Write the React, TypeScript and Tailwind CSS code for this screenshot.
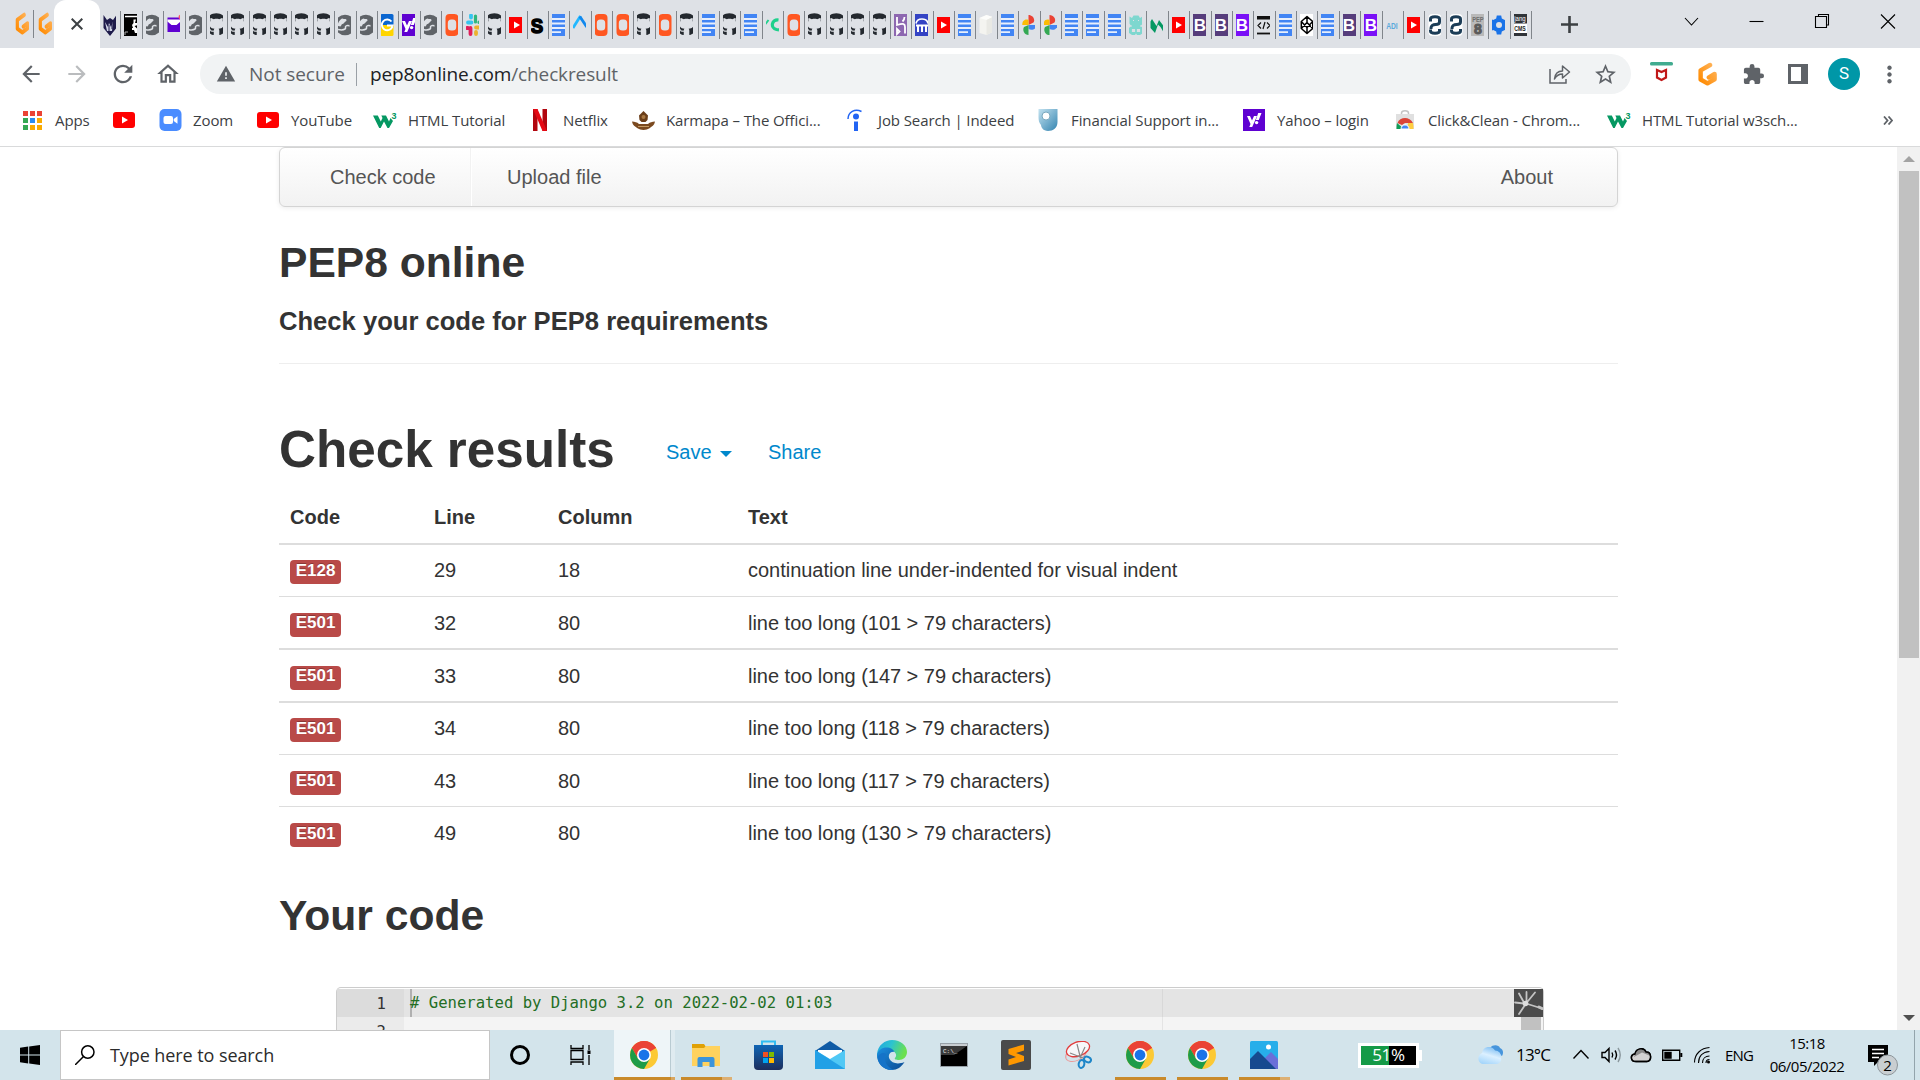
import React from "react";
import {
  MdArrowBack, MdArrowForward, MdRefresh, MdOutlineHome, MdStarBorder,
  MdExtension, MdMoreVert, MdWarning,
} from "react-icons/md";
import { FaGithub } from "react-icons/fa";

const UI = "font-['Open_Sans','Noto_Sans',sans-serif]";

/* ---------- favicons ---------- */

function Svg({ children, w = 22, h = 22, vb = "0 0 22 22" }: { children: React.ReactNode; w?: number; h?: number; vb?: string }) {
  return (
    <svg width={w} height={h} viewBox={vb} className="block shrink-0">
      {children}
    </svg>
  );
}

const gitpod = (
  <g>
    <path d="M13.2 2.6 5 7.3v8L11 18.700l6.200-3.600v-4.600l-5 2.900" fill="none" stroke="url(#gp)" strokeWidth="3.900" strokeLinejoin="round" strokeLinecap="round" />
    <defs>
      <linearGradient id="gp" x1="1" y1="0" x2="0" y2="1">
        <stop offset="0" stopColor="#ffb45b" />
        <stop offset="1" stopColor="#ff8a00" />
      </linearGradient>
    </defs>
  </g>
);

function Youtube({ w = 22, h = 16 }: { w?: number; h?: number }) {
  return (
    <svg width={w} height={h} viewBox="0 0 22 16" className="block shrink-0">
      <rect width="22" height="16" rx="3" fill="#f00" />
      <path d="M9 4.500v7l6-3.500z" fill="#fff" />
    </svg>
  );
}

function YahooIcon() {
  return (
    <Svg>
      <rect width="22" height="22" fill="#5f01d1" />
      <path d="M4 7h3l2 4.600L11 7h3l-4.800 11H6.300l1.200-2.900z" fill="#fff" />
      <path d="M15.200 4h3.300l-2.700 7h-2.900z" fill="#fff" />
      <circle cx="13.600" cy="13.600" r="1.700" fill="#fff" />
    </Svg>
  );
}

function W3() {
  return (
    <Svg w={24} vb="0 0 24 22">
      <path d="M0 6.500h4.800l3 6 1.700-3.500-1.200-2.500H13l3 6 1.500-3.500 2.500 3-4 7h-1.500L11 12.500 7.700 19H6.200z" fill="#059862" />
      <text x="18.500" y="10" fontSize="9" fontWeight="700" fill="#059862" fontFamily="Liberation Sans">3</text>
    </Svg>
  );
}

function Favicon({ k }: { k: string }) {
  switch (k) {
    case "gh":
      return <FaGithub size={23} color="#24292f" className="shrink-0" />;
    case "globe":
      return (
        <Svg>
          <circle cx="11" cy="11" r="10.300" fill="#5f6368" />
          <path d="M4 9.500C5 6.500 7 4.500 9 4.500c.5 1.500 3-.5 3.500 1.500.3 1.500-2 1.500-2.300 3-.7 1-2.700.7-2.700 2l-1 1.500L4 12z" fill="#dee1e6" />
          <path d="M4 15.500c2.500.5 5 .8 7-.5 1.500-1-.5-2 1-3s2.500 0 3.500-.5" fill="none" stroke="#dee1e6" strokeWidth="1.500" />
        </Svg>
      );
    case "docs":
      return (
        <Svg>
          <rect width="22" height="22" fill="#4285f4" />
          <path d="M0 5h22M0 9.500h22M0 14h22M5 18.200h9" stroke="#e8effc" strokeWidth="1.800" />
        </Svg>
      );
    case "yt":
      return <Youtube />;
    case "yahoo":
      return <YahooIcon />;
    case "O":
      return (
        <Svg>
          <rect x="4.500" width="13" height="22" rx="4" fill="#ff5722" />
          <rect x="6.800" y="5.500" width="8.400" height="11" rx="3.500" fill="#dee1e6" />
        </Svg>
      );
    case "B1":
    case "B2":
      return (
        <Svg>
          <rect width="22" height="22" fill={k === "B1" ? "#563d7c" : "#7a10f7"} />
          <text x="11" y="17.300" fontSize="17" fontWeight="700" textAnchor="middle" fill="#fff" fontFamily="Liberation Sans">B</text>
        </Svg>
      );
    case "bat":
      return (
        <Svg>
          <path d="M4.500 1 8 6l3-2 3 2 3.500-5v13L11 22 4.500 14z" fill="#1e1b4b" />
          <path d="m6 8 3 5 1-4 2 4 2-5-1 9h-5z" fill="#cfd3e6" />
          <path d="M10 11v7M13 9v6" stroke="#1e1b4b" />
        </Svg>
      );
    case "R":
      return (
        <Svg>
          <rect width="22" height="22" fill="#000" />
          <path d="M5 2.500h13" stroke="#fff" strokeWidth="1.500" />
          <path d="M13.500 5.500h2.500l-1 3.500h2.500v2l-3 1 3 3v4h-2.500l-1-3h-2v-2h1l-1-3 1.500-2z" fill="#fff" />
          <path d="M8 18h-3v3" stroke="#aaa" fill="none" />
        </Svg>
      );
    case "mail":
      return (
        <Svg>
          <path d="M4.500 3.500h13v14.500h-13z" fill="#5f01d1" />
          <path d="M4.500 5.500h13v2l-4 3.500h-5l-4-3.500z" fill="#fff" />
          <circle cx="18" cy="3" r="2.500" fill="#ff5270" />
        </Svg>
      );
    case "G":
      return (
        <Svg>
          <rect x="4.500" width="13" height="11" rx="1.500" fill="#0a66d0" />
          <rect x="4.500" y="11" width="13" height="11" rx="1.500" fill="#ffd500" />
          <path d="M15.500 7.500A5.400 5.400 0 1 0 16 13.500v-2h-5" fill="none" stroke="#fff" strokeWidth="1.900" />
        </Svg>
      );
    case "slack":
      return (
        <Svg>
          <path d="M9 1.500v2M6 8.500h3.500" stroke="#36c5f0" strokeWidth="3.800" strokeLinecap="round" />
          <path d="M13.500 2v6M17 8v.5" stroke="#2eb67d" strokeWidth="3.200" strokeLinecap="round" />
          <path d="M14 13.500h3M14 18v2" stroke="#ecb22e" strokeWidth="3.800" strokeLinecap="round" />
          <path d="M8.500 14v6M5 14h1" stroke="#e01e5a" strokeWidth="3.800" strokeLinecap="round" />
        </Svg>
      );
    case "S":
      return (
        <Svg>
          <text x="4.800" y="19" fontSize="21" fontWeight="700" fill="#000" stroke="#000" strokeWidth="1.600" fontFamily="Liberation Sans" textLength="12.400" lengthAdjust="spacingAndGlyphs">S</text>
        </Svg>
      );
    case "caret":
      return (
        <Svg>
          <path d="m4 14 7.500-12" stroke="#22b8ff" strokeWidth="2.800" />
          <path d="m10.800 2.500 7 10.500" stroke="#1188ee" strokeWidth="2.800" />
        </Svg>
      );
    case "C":
      return (
        <Svg>
          <path d="M17.500 6c-7-1-8.500 8-2 9.500l2.500.3" fill="none" stroke="#1fd08c" strokeWidth="3.200" />
          <path d="m7.500 6-3 4" stroke="#1fd08c" strokeWidth="2" />
        </Svg>
      );
    case "heroku":
      return (
        <Svg>
          <rect width="22" height="22" fill="#8d67b0" />
          <path d="M8 3v8c7-2 8-1 8 2v6.500M8 15v5l2.500-2.500zM15.500 3c0 2-1 3.500-2 4.500" fill="none" stroke="#fff" strokeWidth="1.800" />
        </Svg>
      );
    case "dome":
      return (
        <Svg>
          <rect width="22" height="22" fill="#3443c4" />
          <path d="M5 9.500c1-6 11-6 12 0" fill="none" stroke="#fff" strokeWidth="1.600" />
          <path d="M5 11.500h12M7 12v6M11 12v6M15 12v6" stroke="#fff" strokeWidth="2" />
        </Svg>
      );
    case "bucket":
      return (
        <Svg>
          <path d="m4.500 4 7-3 6 2v15l-6 3-7-2z" fill="#f4f4f0" />
          <path d="m4.500 4 7 2 6-3-6-2z" fill="#fdfdfb" />
          <path d="M11.500 6v15l6-3V3z" fill="#e9e9e4" />
        </Svg>
      );
    case "photos":
      return (
        <Svg>
          <path d="M10.500 11V1c4 0 7 4 5 7.500z" fill="#ea4335" />
          <path d="M10.500 11H4.300C4 7 7 4.500 10.500 6z" fill="#fbbc04" />
          <path d="M10.500 11h8c0 4-4.500 6-8 4z" fill="#4285f4" />
          <path d="M10.500 11v10c-4 0-6.500-4.500-4.500-8z" fill="#34a853" />
        </Svg>
      );
    case "teal":
      return (
        <Svg>
          <path d="M4.500 2.500 7 4l1.500-2.500h5L15 4l2.500-1.500v7L16 12l2 2v5l-3 2h-3l-1-1.500-1 1.500H7l-3-2v-5l2-2-1.500-2.500z" fill="#7ed7cf" />
          <path d="M8 6.500h1M13 6.500h1M5 12h2M15 12h2M7.500 15.500h2v2h-2zM12.500 15.500h2v2h-2z" stroke="#dee1e6" strokeWidth="1.200" fill="#dee1e6" />
        </Svg>
      );
    case "w":
      return (
        <Svg>
          <path d="M4.500 7.500 6 5l4.500 7L13 6l4.500 6v6L14.500 13 12 10.500 9 19l-4.500-5z" fill="#059862" />
        </Svg>
      );
    case "code":
      return (
        <Svg>
          <path d="M0 2h22v3.500H0z" fill="#111" />
          <path d="M0 19.500h22" stroke="#111" strokeWidth="1.800" />
          <path d="m8 8.500-3 3 3 3M14 8.500l3 3-3 3M12 8l-2 7" stroke="#111" strokeWidth="1.200" fill="none" />
        </Svg>
      );
    case "codepen":
      return (
        <Svg>
          <rect width="22" height="22" fill="#fff" />
          <path d="m11 2.500 5.700 5v7l-5.700 5-5.700-5v-7zM11 2.500V8M11 14v5.500M5.300 7.500 11 13.500l5.700-6M5.300 14.500 11 8.500l5.700 6" fill="none" stroke="#000" strokeWidth="1.500" strokeLinejoin="round" />
        </Svg>
      );
    case "adi":
      return (
        <Svg>
          <text x="5.200" y="14.500" fontSize="9" fontWeight="700" fill="#5aaadc" fontFamily="Liberation Sans" textLength="11.500" lengthAdjust="spacingAndGlyphs">ADI</text>
        </Svg>
      );
    case "py":
      return (
        <Svg>
          <rect x="4.500" width="13" height="22" rx="4" fill="#fff" />
          <path d="M6.500 7.500V5c0-3 9-3 9 0v3c0 2-1.500 2.500-4 2.500S7 12 7 14v1M6.500 15.500V17c0 3 9 3 9 0v-2" fill="none" stroke="#1c3d57" strokeWidth="3" />
        </Svg>
      );
    case "pep":
      return (
        <Svg>
          <rect width="22" height="22" fill="#b9b9b9" />
          <text x="5.200" y="8" fontSize="8" fontWeight="700" fill="#6e6e6e" fontFamily="Liberation Sans" textLength="11.500" lengthAdjust="spacingAndGlyphs">PEP</text>
          <text x="11" y="20" fontSize="14" fontWeight="700" textAnchor="middle" fill="#5b5b5b" stroke="#5b5b5b" fontFamily="Liberation Sans">8</text>
        </Svg>
      );
    case "gear":
      return (
        <Svg>
          <path d="M8.800 1.500h4.400l.6 3 3 1.500 2.700-1 2 3.800-2.200 2.200 2.200 2.200-2 3.800-2.700-1-3 1.500-.6 3H8.800l-.6-3-3-1.500-2.700 1-2-3.800L2.700 11 .5 8.800 2.500 5l2.700 1 3-1.500z" fill="#1a73e8" />
          <circle cx="11" cy="11" r="3" fill="#dee1e6" />
        </Svg>
      );
    case "cms":
      return (
        <Svg>
          <rect width="22" height="22" fill="#2f3338" />
          <rect y="9.500" width="22" height="9.500" fill="#fff" />
          <text x="5.200" y="7" fontSize="6.500" fill="#fff" fontFamily="Liberation Sans" textLength="11.500" lengthAdjust="spacingAndGlyphs">jang</text>
          <text x="5.200" y="17" fontSize="6.500" fontWeight="700" fill="#222" fontFamily="Liberation Sans" textLength="11.500" lengthAdjust="spacingAndGlyphs">CMS</text>
        </Svg>
      );
    default:
      return null;
  }
}

const TABS = (
  "bat R globe mail globe gh gh gh gh gh gh globe globe G yahoo globe O slack gh yt S docs caret O O gh O gh docs gh docs C O " +
  "gh gh gh gh heroku dome yt docs bucket docs photos photos docs docs docs teal w yt B1 B1 B2 code docs codepen docs B1 B2 adi yt py py pep gear cms"
).split(" ");

function TabStrip() {
  return (
    <div className="flex h-12 bg-[#dee1e6]">
      <div className="flex w-[54px] items-center pl-[14px]">
        <div className="flex h-7 w-[20px] items-center border-r border-[#80858b]">
          <svg width="15" height="24" viewBox="1 0 18 22" preserveAspectRatio="none">{gitpod}</svg>
        </div>
        <svg width="15" height="24" viewBox="1 0 18 22" preserveAspectRatio="none" className="ml-[3px]">{gitpod}</svg>
      </div>
      <div className="flex w-[46px] items-center justify-center rounded-t-xl bg-white">
        <svg width="12" height="12" viewBox="0 0 12 12" stroke="#3c4043" strokeWidth="2">
          <path d="m.700.700 10.600 10.600M11.300.700.700 11.300" />
        </svg>
      </div>
      <div className="flex w-[1432px] items-center pt-px">
        {TABS.map((k, i) => (
          <div key={i} className="flex h-7 flex-1 items-center border-r border-[#80858b] pl-[3px]">
            <div className="flex h-[23px] w-[13px] shrink-0 items-center justify-center overflow-hidden">
              <Favicon k={k} />
            </div>
          </div>
        ))}
      </div>
      <div className="flex w-[74px] items-center justify-center">
        <svg width="17" height="17" viewBox="0 0 17 17" stroke="#3c4043" strokeWidth="2.600">
          <path d="M8.500 0v17M0 8.500h17" />
        </svg>
      </div>
      <div className="flex flex-1 items-center pl-[78px] pb-[6px]">
        <svg width="212" height="20" viewBox="0 0 212 20" fill="none" stroke="#000" strokeWidth="1.100">
          <path d="m1 7 6.500 7L14 7" />
          <path d="M65.500 10.500h14" />
          <path d="M131.500 5.500h11v11h-11zM134.500 5V3.500h10v10.500H143" />
          <path d="m197 3.500 14 14M211 3.500l-14 14" />
        </svg>
      </div>
    </div>
  );
}

function Toolbar() {
  return (
    <div className="flex h-[52px] items-center bg-white text-[#5f6368]">
      <div className="flex w-[200px] items-center pl-[18px]">
        <MdArrowBack size={26} className="mr-[20px]" />
        <MdArrowForward size={26} color="#babcbe" className="mr-[19px]" />
        <MdRefresh size={28} className="mr-[18px]" />
        <MdOutlineHome size={26} />
      </div>
      <div className={`flex h-10 w-[1431px] items-center rounded-full bg-[#f1f3f4] ${UI} text-[19px]`}>
        <MdWarning size={20} className="ml-[16px]" />
        <span className="ml-[13px] w-[107px] whitespace-nowrap tracking-[-0.050px]">Not secure</span>
        <div className="h-[23px] w-px bg-[#9aa0a6]" />
        <span className="ml-[13px] whitespace-nowrap tracking-[-0.120px] text-[#202124]">
          pep8online.com<span className="text-[#5f6368]">/checkresult</span>
        </span>
        <div className="ml-auto flex items-center pr-[13px]">
          <svg width="22" height="20" viewBox="0 0 22 20" fill="none" stroke="#5f6368" strokeWidth="1.500" className="mr-[22px]">
            <path d="M1 5v14h16v-4" />
            <path d="M5.500 15c.5-5 3-8 8-8V2l7 6-7 6v-4c-3.500 0-6 1.500-8 5z" strokeLinejoin="round" />
          </svg>
          <MdStarBorder size={25} />
        </div>
      </div>
      <div className="flex flex-1 items-center pl-[19px]">
        <svg width="23" height="20" viewBox="0 0 23 20" className="-mt-1">
          <rect width="23" height="3.500" rx="1.500" fill="#41ab8f" />
          <path d="m7 8 4.500 2L16 8v7.500L11.500 18 7 15.500z" fill="none" stroke="#c01818" strokeWidth="2.200" />
        </svg>
        <svg width="23" height="24" viewBox="1 0 20 21" className="ml-[23px]">{gitpod}</svg>
        <MdExtension size={23} className="ml-[23px]" />
        <svg width="20" height="20" viewBox="0 0 20 20" className="ml-[23px]">
          <path d="M0 0h20v20H0zM3 3v14h10V3z" fill="#5f6368" fillRule="evenodd" />
        </svg>
        <div className="ml-[20px] flex h-8 w-8 items-center justify-center rounded-full bg-[#0097a7] font-['Roboto',sans-serif] text-[17px] text-white">S</div>
        <MdMoreVert size={27} className="ml-[16px]" />
      </div>
    </div>
  );
}

function Bookmark({ w, icon, label }: { w: string; icon: React.ReactNode; label: string }) {
  return (
    <div className={`flex shrink-0 items-center ${w}`}>
      <div className="flex w-6 shrink-0 items-center justify-center">{icon}</div>
      <span className="ml-[11px] whitespace-nowrap">{label}</span>
    </div>
  );
}

const APP_COLORS = ["#ea4335", "#ea4335", "#ea4335", "#34a853", "#2a8cf0", "#f9ab00", "#34a853", "#f9ab00", "#f9ab00"];

function Bookmarks() {
  return (
    <div className={`flex h-[46px] items-center bg-white pl-[20px] pb-[6px] ${UI} text-[15px] tracking-[-0.100px] text-[#3c4043]`}>
      <Bookmark
        w="w-[92px]"
        label="Apps"
        icon={
          <div className="grid grid-cols-3 gap-[2px]">
            {APP_COLORS.map((c, i) => (
              <div key={i} className="h-[5px] w-[5px]" style={{ background: c }} />
            ))}
          </div>
        }
      />
      <Bookmark w="w-[46px]" label="" icon={<Youtube />} />
      <Bookmark
        w="w-[98px]"
        label="Zoom"
        icon={
          <Svg w={23}>
            <rect width="22" height="22" rx="5" fill="#4a8cff" />
            <rect x="4" y="7" width="9.500" height="8" rx="2" fill="#fff" />
            <path d="m14.200 10 3.800-2.800v7.600L14.200 12z" fill="#fff" />
          </Svg>
        }
      />
      <Bookmark w="w-[117px]" label="YouTube" icon={<Youtube />} />
      <Bookmark w="w-[155px]" label="HTML Tutorial" icon={<W3 />} />
      <Bookmark
        w="w-[103px]"
        label="Netflix"
        icon={
          <Svg w={14} vb="0 0 14 22">
            <path d="M0 0h4.500v22H0zM9.500 0H14v22H9.500z" fill="#b1060f" />
            <path d="M0 0h4.500L14 22H9.500z" fill="#e50914" />
          </Svg>
        }
      />
      <Bookmark
        w="w-[212px]"
        label="Karmapa – The Offici..."
        icon={
          <Svg w={23} vb="0 0 23 22">
            <path d="M11.500 2 14 4.500l2 2-.5 4.500-2 2h-4l-2-2L7 6.500l2-2z" fill="#6b3e19" />
            <path d="M0 12.500c3 .5 5 .5 7 2.500h9c2-2 4-2 7-2.500-1 4.500-3 4.500-5 6.500-4 2.500-9 2.500-13 0-2-2-4-2-5-6.500z" fill="#7b4a20" />
            <circle cx="11.500" cy="8" r="2" fill="#a97842" />
            <path d="M6 17.500h11" stroke="#c59a62" />
          </Svg>
        }
      />
      <Bookmark
        w="w-[193px]"
        label="Job Search | Indeed"
        icon={
          <Svg w={16} vb="0 0 16 22">
            <circle cx="9" cy="7.500" r="3" fill="#2164f3" />
            <path d="M7 12.500h4V22H7z" fill="#2164f3" />
            <path d="M1 10C1 3 8-1 14.500 2.500" fill="none" stroke="#2164f3" strokeWidth="1.500" />
          </Svg>
        }
      />
      <Bookmark
        w="w-[206px]"
        label="Financial Support in..."
        icon={
          <Svg w={20} vb="0 0 20 22">
            <defs>
              <linearGradient id="shield" x1="0" y1="0" x2="1" y2="1">
                <stop offset="0" stopColor="#c3e2f0" />
                <stop offset="1" stopColor="#3384b0" />
              </linearGradient>
            </defs>
            <path d="M.5 0h19v13c0 6-4.500 9-9.500 9s-7-4-7-6C1 14 .5 11 .5 8z" fill="url(#shield)" />
            <circle cx="8" cy="7" r="4" fill="#fff" stroke="#7aa9bf" />
          </Svg>
        }
      />
      <Bookmark w="w-[151px]" label="Yahoo – login" icon={<YahooIcon />} />
      <Bookmark
        w="w-[214px]"
        label="Click&Clean - Chrom..."
        icon={
          <Svg w={20} h={20} vb="0 0 20 20">
            <path d="M6.500 5V3c0-3 7-3 7 0v2" fill="none" stroke="#c4c4c4" strokeWidth="1.500" />
            <path d="M1 4h18v15H1z" fill="#e0e0e0" />
            <path d="M2.500 13c2-6 12-7 15.500 0H10l-3 2z" fill="#db4437" />
            <path d="M2 13c-.5 2-.5 4-.5 6H9z" fill="#0f9d58" />
            <path d="M18 13c.5 2 .5 4 .5 6h-6l.5-6z" fill="#ffcd40" />
            <path d="M6 19c0-5.500 8-5.500 8 0z" fill="#4285f4" stroke="#fff" />
          </Svg>
        }
      />
      <Bookmark w="w-[250px]" label="HTML Tutorial w3sch..." icon={<W3 />} />
      <svg width="10" height="9" viewBox="0 0 10 9" fill="none" stroke="#5f6368" strokeWidth="1.800" className="ml-[26px]">
        <path d="m1 .5 3.500 4L1 8.500M5.500.5l3.500 4-3.500 4" />
      </svg>
    </div>
  );
}

/* ---------- page ---------- */

const ROWS = [
  { code: "E128", line: "29", col: "18", text: "continuation line under-indented for visual indent", rule: "border-t-2" },
  { code: "E501", line: "32", col: "80", text: "line too long (101 > 79 characters)", rule: "border-t" },
  { code: "E501", line: "33", col: "80", text: "line too long (147 > 79 characters)", rule: "border-t-2" },
  { code: "E501", line: "34", col: "80", text: "line too long (118 > 79 characters)", rule: "border-t-2" },
  { code: "E501", line: "43", col: "80", text: "line too long (117 > 79 characters)", rule: "border-t" },
  { code: "E501", line: "49", col: "80", text: "line too long (130 > 79 characters)", rule: "border-t" },
];

const COLS = "grid grid-cols-[144px_124px_190px_1fr] pl-[11px]";

function Page() {
  return (
    <div className="flex h-[883px] overflow-hidden bg-white font-['Liberation_Sans',Arial,sans-serif] text-[20px] text-[#333]">
      <div className="w-[1897px] pl-[279px]">
        <div className="flex h-[60px] w-[1339px] rounded-[6px] border border-[#d4d4d4] bg-gradient-to-b from-white to-[#f2f2f2] text-[#555] shadow-[0_1px_5px_rgba(0,0,0,0.08)]">
          <div className="flex w-[191px] items-center border-r border-[#f2f2f2] pl-[50px]">Check code</div>
          <div className="flex items-center border-l border-white pl-[35px]">Upload file</div>
          <div className="ml-auto flex items-center pr-[64px]">About</div>
        </div>
        <div className="w-[1339px]">
          <h1 className="mt-[30px] h-[50px] text-[42.600px] leading-[50px] font-bold">PEP8 online</h1>
          <h4 className="mt-[19px] h-[30px] text-[25.600px] leading-[30px] font-bold">Check your code for PEP8 requirements</h4>
          <div className="mt-[27px] h-px bg-[#eee]" />
          <div className="mt-[56px] flex h-[60px] items-center">
            <h1 className="w-[387px] text-[51.200px] leading-[60px] font-bold">Check results</h1>
            <span className="flex w-[102px] items-center pt-[3px] text-[#0088cc]">
              Save
              <span className="ml-[8px] mt-1 border-x-[6px] border-t-[6px] border-x-transparent border-t-[#0088cc]" />
            </span>
            <span className="pt-[3px] text-[#0088cc]">Share</span>
          </div>
          <div className={`${COLS} mt-[11px] h-[52px] items-center font-bold`}>
            <span>Code</span><span>Line</span><span>Column</span><span>Text</span>
          </div>
          {ROWS.map((r, i) => (
            <div key={i} className={`${COLS} h-[52.700px] items-center border-[#ddd] ${r.rule}`}>
              <span className="mt-[4px] flex h-[24px] w-[51px] items-center justify-center rounded-[4px] bg-[#b94a48] pb-[3px] text-[17px] font-bold text-white [text-shadow:0_-1px_0_rgba(0,0,0,0.25)]">
                {r.code}
              </span>
              <span>{r.line}</span><span>{r.col}</span><span className="tracking-[-0.020px]">{r.text}</span>
            </div>
          ))}
          <h1 className="mt-[31px] h-[50px] text-[42.600px] leading-[50px] font-bold">Your code</h1>
          <div className="mt-[47px] ml-[57px] w-[1208px] rounded-t-[5px] border-x border-t border-[#ccc] pt-px font-['DejaVu_Sans_Mono',monospace] text-[15.600px]">
            <div className="flex h-[28px] items-center bg-[#e4e4e4]">
              <div className="h-full w-[67px] bg-[#dcdcdc] pr-[18px] text-right leading-[31px] text-[#333]">1</div>
              <div className="ml-[6px] h-full w-[2px] bg-[#b0b0b0]" />
              <span className="-ml-[2px] w-[752px] pt-[2px] text-[#236e24]"># Generated by Django 3.2 on 2022-02-02 01:03</span>
              <div className="h-full w-px bg-[#d8d8d8]" />
              <div className="ml-auto h-full w-[29px] bg-[#4b4b4b]">
                <svg width="29" height="28" viewBox="0 0 29 28" fill="none" stroke="#c4c4c4" strokeWidth="1.800" strokeLinecap="round">
                  <path d="M5 4.500l5.500 10M12.500 3v11M21 3.500l-9 11M28 19.500 12 14.500M5 25l6-9M1 13.500l9 1" />
                  <circle cx="11.500" cy="14.500" r="2.800" fill="#ddd" stroke="none" />
                  <path d="m25 18 3 1.500" strokeWidth="3" />
                </svg>
              </div>
            </div>
            <div className="flex h-[28px] bg-[#f4f4f4]">
              <div className="h-full w-[67px] bg-[#ebebeb] pr-[18px] text-right leading-[30px] text-[#333]">2</div>
              <div className="ml-[758px] h-full w-px bg-[#e4e4e4]" />
              <div className="mr-[2px] ml-auto h-full w-[20px] bg-[#c1c1c1]" />
            </div>
          </div>
        </div>
      </div>
      <div className="flex w-[23px] flex-col items-center bg-[#f1f1f1]">
        <div className="flex h-6 items-center">
          <div className="border-x-[6px] border-b-[6px] border-x-transparent border-b-[#a3a3a3]" />
        </div>
        <div className="h-[487px] w-[20px] bg-[#c1c1c1]" />
        <div className="mt-auto flex h-6 items-center">
          <div className="border-x-[6px] border-t-[6px] border-x-transparent border-t-[#505050]" />
        </div>
      </div>
    </div>
  );
}

/* ---------- taskbar ---------- */

function Chrome() {
  return (
    <Svg w={28} h={28} vb="0 0 28 28">
      <circle cx="14" cy="14" r="14" fill="#fcc934" />
      <path d="M14 14 1.900 7A14 14 0 0 1 26.100 7z" fill="#ea4335" />
      <path d="M14 7h12.100A14 14 0 0 0 1.900 7l6 10.500z" fill="#ea4335" />
      <path d="M1.900 7A14 14 0 0 0 14 28l6-10.500-6 3-6-3z" fill="#1e9c48" />
      <circle cx="14" cy="14" r="7" fill="#fff" />
      <circle cx="14" cy="14" r="5.400" fill="#1a73e8" />
    </Svg>
  );
}

function Explorer() {
  return (
    <Svg w={28} h={28} vb="0 0 28 28">
      <path d="M0 3h12l2 3v6H0z" fill="#e0a106" />
      <path d="M0 7h12l2-2h14v20H0z" fill="#ffd25e" />
      <path d="M5.500 26V18q0-2 2-2h13q2 0 2 2v8h-5v-5h-7v5z" fill="#3b94db" />
    </Svg>
  );
}

function Store() {
  return (
    <Svg w={29} h={30} vb="0 0 29 30">
      <defs>
        <linearGradient id="store" x1="0" y1="0" x2="0" y2="1">
          <stop offset="0" stopColor="#0f65b5" />
          <stop offset="1" stopColor="#1c2e5c" />
        </linearGradient>
      </defs>
      <path d="M8 7V1.500h13V7" fill="none" stroke="#32bdf2" strokeWidth="2" />
      <path d="M0 5h29v21q0 4-4 4H4q-4 0-4-4z" fill="url(#store)" />
      <path d="M9 12h5v5H9z" fill="#f25022" />
      <path d="M15 12h5v5h-5z" fill="#7fba00" />
      <path d="M9 18h5v5H9z" fill="#00a4ef" />
      <path d="M15 18h5v5h-5z" fill="#ffb900" />
    </Svg>
  );
}

function Mail() {
  return (
    <Svg w={30} h={28} vb="0 0 30 28">
      <path d="M0 10 15 0l15 10v4H0z" fill="#0f5ba5" />
      <path d="M3 9h24v10H3z" fill="#fff" />
      <path d="M0 9l15 9 15-9v19H0z" fill="#50c8f5" />
      <path d="M0 9l15 9.500L30 28H0z" fill="#22a0e6" />
    </Svg>
  );
}

function Edge() {
  return (
    <Svg w={30} h={30} vb="0 0 30 30">
      <defs>
        <linearGradient id="edge1" x1="0" y1="0" x2="1" y2="0.300">
          <stop offset="0" stopColor="#1fa5e0" />
          <stop offset="0.500" stopColor="#2cc3d0" />
          <stop offset="1" stopColor="#6be04f" />
        </linearGradient>
        <linearGradient id="edge2" x1="0" y1="0" x2="1" y2="1">
          <stop offset="0" stopColor="#1b8fe0" />
          <stop offset="1" stopColor="#0c4a93" />
        </linearGradient>
      </defs>
      <path d="M0 14C1 5 8 0 15 0c9 0 15 6 15 12 0 5-4 8-8 8-3 0-5-1-4-2 3-3 0-8-6-8-6 0-10 3-12 8z" fill="url(#edge1)" />
      <path d="M0 15c1-5 5-7.500 9.500-7.500 4 0 7 2 8 4.500-4-1-7 3-5 7 2 4 8 6 15 3-3 5-7.500 8-12.500 8C6 30 0 23 0 15z" fill="url(#edge2)" />
      <path d="M9 14c-3 6 1 14 8 15.800C8 31 1 25 .5 17 3 13 7 12 9 14z" fill="#1573c8" />
    </Svg>
  );
}

function Cmd() {
  return (
    <Svg w={28} h={24} vb="0 0 28 24">
      <rect x=".5" y=".5" width="27" height="23" fill="#000" stroke="#98a1a8" />
      <path d="M1 2h26" stroke="#c9ced2" strokeWidth="2" />
      <path d="M1 3h26L14 12H1z" fill="#3a3a3a" />
      <text x="3" y="9.500" fontSize="6" fill="#eee" fontFamily="Liberation Mono">C:\_</text>
    </Svg>
  );
}

function Sublime() {
  return (
    <Svg w={30} h={30} vb="0 0 30 30">
      <rect width="30" height="30" rx="2" fill="#4a4a4a" />
      <path d="M23 4.500v6L15 13l8 3v5L7.500 25.500v-6L15 17l-7.500-3V9z" fill="#ff9800" />
    </Svg>
  );
}

function Snip() {
  return (
    <Svg w={28} h={28} vb="0 0 28 28">
      <ellipse cx="12" cy="13" rx="11" ry="6.500" fill="none" stroke="#eb9a9a" transform="rotate(-25 12 13)" />
      <ellipse cx="14" cy="8" rx="12" ry="7" fill="#f7f7f9" stroke="#e23b3b" strokeWidth="1.300" transform="rotate(-20 14 8)" />
      <path d="m13 3 3.500 14M6 12l13 5M21 6l-5 11" stroke="#888" strokeWidth="1.200" />
      <ellipse cx="17.500" cy="23" rx="2.800" ry="4" fill="none" stroke="#1e86c8" strokeWidth="2" transform="rotate(10 17.500 23)" />
      <ellipse cx="23.500" cy="18.500" rx="3.600" ry="2.600" fill="none" stroke="#1e86c8" strokeWidth="2" transform="rotate(25 23.500 18.500)" />
    </Svg>
  );
}

function Photos() {
  return (
    <Svg w={28} h={28} vb="0 0 28 28">
      <rect width="28" height="28" rx="1.500" fill="#27aeea" />
      <path d="m14 18 7-7 7 7v10H14z" fill="#6a6fd8" />
      <path d="m0 18 8-8 18 18H0z" fill="#164a8f" />
      <circle cx="18.500" cy="6" r="2.500" fill="#fff" />
    </Svg>
  );
}

function Task({ icon, bar = "" }: { icon: React.ReactNode; bar?: string }) {
  return (
    <div className="flex h-full w-[62px] flex-col items-center">
      <div className="flex h-[47px] w-full items-center justify-center pt-[3px]">{icon}</div>
      <div className={`h-[3px] ${bar}`} />
    </div>
  );
}

function Taskbar() {
  return (
    <div className={`flex h-[50px] items-center bg-[#d3e4eb] ${UI} text-black`}>
      <div className="flex w-[60px] justify-center">
        <Svg w={20} h={20} vb="0 0 20 20">
          <path d="M0 2.800 8.200 1.600v7.900H0zM9.200 1.500 20 0v9.500H9.200zM0 10.500h8.200v7.900L0 17.200zM9.200 10.500H20V20L9.200 18.500z" />
        </Svg>
      </div>
      <div className="flex h-[50px] w-[430px] items-center border border-[#c6c6c6] bg-white pl-[14px]">
        <svg width="20" height="20" viewBox="0 0 20 20" fill="none" stroke="#000" strokeWidth="1.500">
          <circle cx="12.800" cy="7" r="6.200" />
          <path d="M8.500 11.500 0 20" />
        </svg>
        <span className="ml-[15px] text-[18px] tracking-[-0.080px] text-[#2b2b2b]">Type here to search</span>
      </div>
      <div className="flex w-[60px] justify-center">
        <div className="h-[20px] w-[20px] rounded-full border-[3px] border-black" />
      </div>
      <div className="flex w-[64px] justify-center pr-[3px]">
        <svg width="21" height="20" viewBox="0 0 21 20" fill="none" stroke="#000" strokeWidth="1.300">
          <path d="M1 0v3.500h12V0M1 5.500h12v9H1zM1 20v-3h12v3M19 0v5M19 10v10" />
          <path d="M19 5.500v3.500" strokeWidth="3" />
        </svg>
      </div>
      <div className="flex h-full w-[61px] flex-col">
        <div className="flex h-[47px]">
          <div className="flex w-[57px] items-center justify-center border-r border-[#b9cbd2] bg-[#eef5f8] pt-[3px] pl-[3px]"><Chrome /></div>
          <div className="w-1 bg-[#dfebf0]" />
        </div>
        <div className="flex h-[3px] bg-[#d8a660]"><div className="w-[57px] bg-[#c98a2b]" /></div>
      </div>
      <Task icon={<Explorer />} bar="w-[51px] bg-gradient-to-r from-[#c98a2b] from-80% to-[#ddb074] to-80%" />
      <Task icon={<Store />} />
      <Task icon={<Mail />} />
      <Task icon={<Edge />} />
      <Task icon={<Cmd />} />
      <Task icon={<Sublime />} />
      <Task icon={<Snip />} />
      <Task icon={<Chrome />} bar="w-[51px] bg-[#c98a2b]" />
      <Task icon={<Chrome />} bar="w-[51px] bg-[#c98a2b]" />
      <Task icon={<Photos />} bar="w-[51px] bg-gradient-to-r from-[#c98a2b] from-80% to-[#ddb074] to-80%" />
      <div className="ml-[63px] flex h-[25px] w-[61px] items-center justify-center border-[3px] border-white bg-black bg-gradient-to-r from-[#149a47] from-50% to-black to-50% text-[17px] tracking-[-0.300px] text-white">
        51%
      </div>
      <div className="h-[11px] w-[3px] bg-white" />
      <svg width="28" height="20" viewBox="0 0 28 20" className="ml-[54px]">
        <defs>
          <linearGradient id="cloud" x1="0.300" y1="1" x2="0.700" y2="0">
            <stop offset="0" stopColor="#a5d6fb" />
            <stop offset="0.500" stopColor="#dcf0ff" />
            <stop offset="1" stopColor="#7dbdf2" />
          </linearGradient>
        </defs>
        <path d="M14 3c3-4 9-3 10 0 3 1 4 5 2 8z" fill="#4795dc" />
        <path d="M6 19a6 6 0 0 1 0-11A7 7 0 0 1 19 5.500a6 6 0 0 1 6 7 5 5 0 0 1-4 6.500z" fill="url(#cloud)" />
      </svg>
      <span className="ml-[12px] w-[57px] text-[17px] tracking-[-0.800px]">13°C</span>
      <svg width="140" height="24" viewBox="0 0 140 24" fill="none" stroke="#000" strokeWidth="1.400">
        <path d="m.5 15.500 7.500-8 7.500 8" />
        <path d="M29 9.500h3l4-4v13l-4-4h-3z" />
        <path d="M39 9.500q1.500 2.500 0 5M42 7.500q3 4.500 0 9" />
        <path d="M45 5q4.500 7 0 14" stroke="#8b989e" />
        <path d="M63 18.500c-6 0-6-7-1-7.500 1-6 9-7 11-2 6 0 6 9.500 1 9.500z" fill="#d2d2d2" />
        <path d="M62 11c1-6 9-7 11-2 3 0 4 1.500 4.500 4L69 9.500 61 14z" fill="#8a8a8a" stroke="none" />
        <path d="M63 18.500c-6 0-6-7-1-7.500 1-6 9-7 11-2 6 0 6 9.500 1 9.500z" />
        <path d="M89.700 7.200h17v10h-17z" />
        <path d="M108.300 10v4" strokeWidth="2" />
        <path d="M92 9.500h6v5.500h-6z" fill="#000" />
        <path d="M121.500 19.500C121.500 11 128 5 136.500 4.500M125.500 20c0-6.500 4-11 11-11.500M129.500 20c0-4.500 3-7 7-7M133 20c0-2 1.500-3.500 3.500-3.500" strokeWidth="1.100" />
        <circle cx="135.500" cy="19" r="1.500" fill="#000" stroke="none" />
      </svg>
      <span className="ml-[12px] w-[40px] text-[15px] tracking-[-0.800px]">ENG</span>
      <div className="flex w-[84px] flex-col items-center text-[15px] leading-[23px] tracking-[-0.500px]">
        <span>15:18</span>
        <span>06/05/2022</span>
      </div>
      <svg width="34" height="34" viewBox="0 0 34 34" className="ml-[18px] mt-[9px]">
        <path d="M1 2h20v17H11l-4 4v-4H1z" />
        <path d="M5 6.500h12M5 10.500h12M5 14.500h7" stroke="#fff" strokeWidth="1.300" />
        <circle cx="20.500" cy="22" r="10" fill="#c9ced1" stroke="#8d959a" />
        <text x="20.500" y="27.500" fontSize="15" textAnchor="middle" fill="#000" fontFamily="Open Sans">2</text>
      </svg>
      <div className="ml-auto h-full w-[6px] border-l border-[#93a4ac]" />
    </div>
  );
}

export default function App() {
  return (
    <div className="flex h-[1080px] w-[1920px] flex-col overflow-hidden bg-white">
      <TabStrip />
      <Toolbar />
      <Bookmarks />
      <div className="h-px bg-[#d9dadb]" />
      <Page />
      <Taskbar />
    </div>
  );
}
